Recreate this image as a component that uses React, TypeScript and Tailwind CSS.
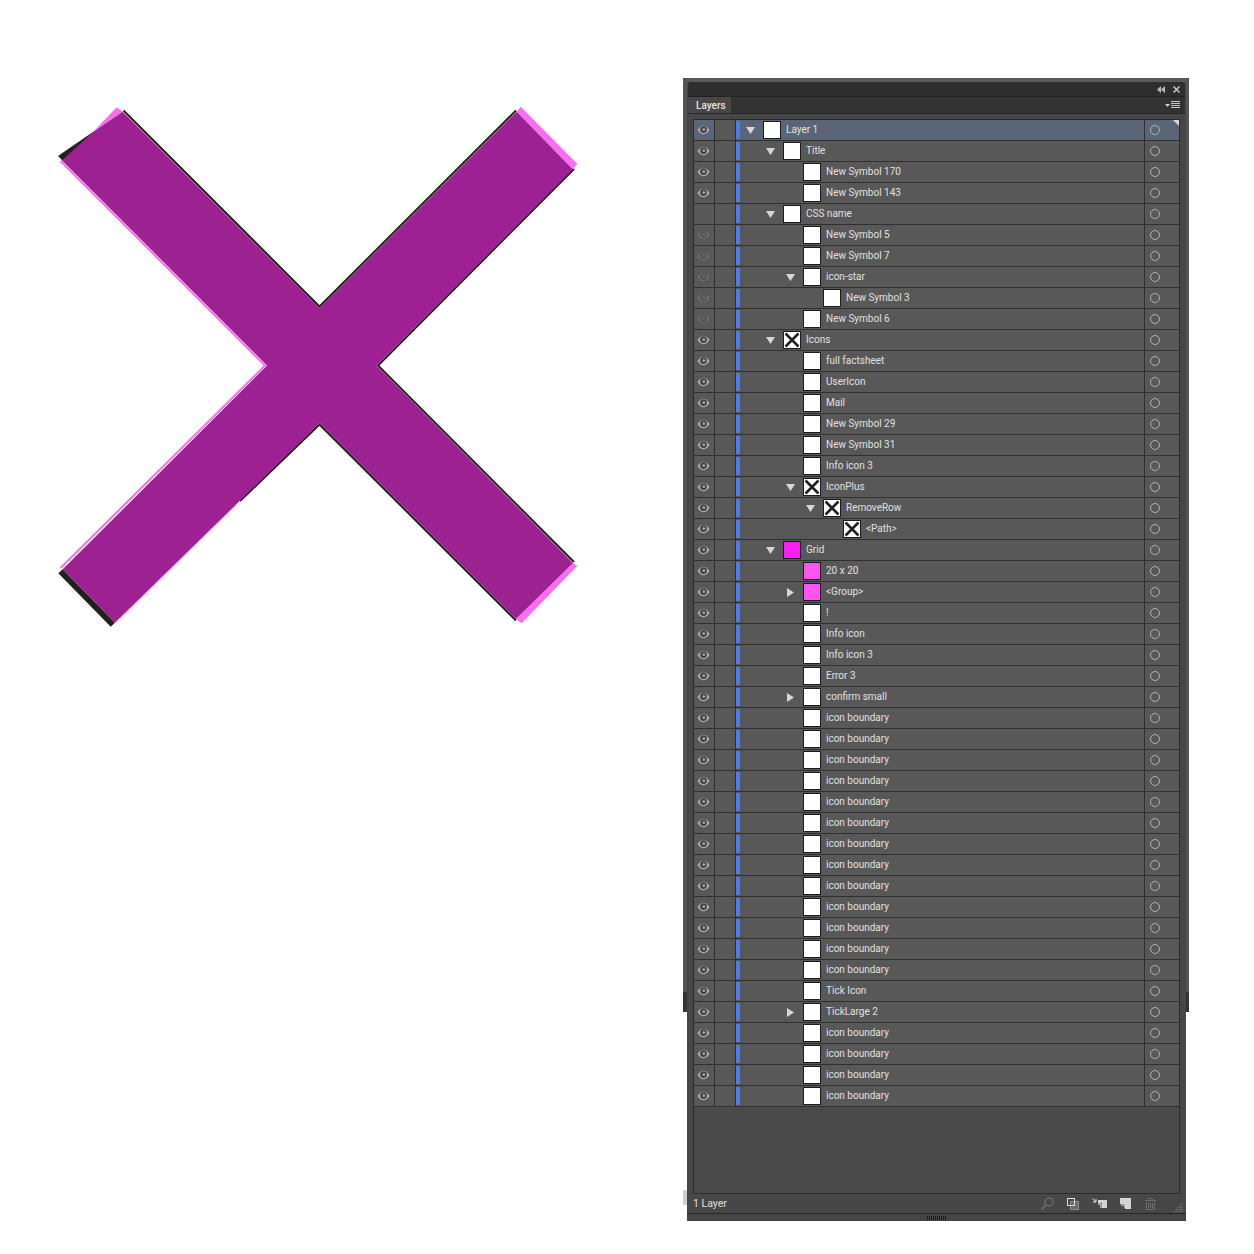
const rows = [
  { name: 'Layer 1', level: 0, arrow: 'down', eye: 'on', thumb: 'white', selected: true },
  { name: 'Title', level: 1, arrow: 'down', eye: 'on', thumb: 'white' },
  { name: 'New Symbol 170', level: 2, eye: 'on', thumb: 'white' },
  { name: 'New Symbol 143', level: 2, eye: 'on', thumb: 'white' },
  { name: 'CSS name', level: 1, arrow: 'down', eye: 'none', thumb: 'white' },
  { name: 'New Symbol 5', level: 2, eye: 'dim', thumb: 'white' },
  { name: 'New Symbol 7', level: 2, eye: 'dim', thumb: 'white' },
  { name: 'icon-star', level: 2, arrow: 'down', eye: 'dim', thumb: 'white' },
  { name: 'New Symbol 3', level: 3, eye: 'dim', thumb: 'white' },
  { name: 'New Symbol 6', level: 2, eye: 'dim', thumb: 'white' },
  { name: 'Icons', level: 1, arrow: 'down', eye: 'on', thumb: 'x' },
  { name: 'full factsheet', level: 2, eye: 'on', thumb: 'white' },
  { name: 'UserIcon', level: 2, eye: 'on', thumb: 'white' },
  { name: 'Mail', level: 2, eye: 'on', thumb: 'white' },
  { name: 'New Symbol 29', level: 2, eye: 'on', thumb: 'white' },
  { name: 'New Symbol 31', level: 2, eye: 'on', thumb: 'white' },
  { name: 'Info icon 3', level: 2, eye: 'on', thumb: 'white' },
  { name: 'IconPlus', level: 2, arrow: 'down', eye: 'on', thumb: 'x' },
  { name: 'RemoveRow', level: 3, arrow: 'down', eye: 'on', thumb: 'x' },
  { name: '<Path>', level: 4, eye: 'on', thumb: 'x' },
  { name: 'Grid', level: 1, arrow: 'down', eye: 'on', thumb: 'magenta' },
  { name: '20 x 20', level: 2, eye: 'on', thumb: 'pink' },
  { name: '<Group>', level: 2, arrow: 'right', eye: 'on', thumb: 'pink' },
  { name: '!', level: 2, eye: 'on', thumb: 'white' },
  { name: 'Info icon', level: 2, eye: 'on', thumb: 'white' },
  { name: 'Info icon 3', level: 2, eye: 'on', thumb: 'white' },
  { name: 'Error 3', level: 2, eye: 'on', thumb: 'white' },
  { name: 'confirm small', level: 2, arrow: 'right', eye: 'on', thumb: 'white' },
  ...Array.from({ length: 13 }, () => ({ name: 'icon boundary', level: 2, eye: 'on', thumb: 'white' })),
  { name: 'Tick Icon', level: 2, eye: 'on', thumb: 'white' },
  { name: 'TickLarge 2', level: 2, arrow: 'right', eye: 'on', thumb: 'white' },
  ...Array.from({ length: 4 }, () => ({ name: 'icon boundary', level: 2, eye: 'on', thumb: 'white' })),
];

const indent = ['pl-[5px]', 'pl-[25px]', 'pl-[45px]', 'pl-[65px]', 'pl-[85px]'];

function Eye({ dim }: { dim?: boolean }) {
  return (
    <svg width="13" height="10" viewBox="0 0 13 10" className={`mb-[1px] ${dim ? 'opacity-25' : ''}`}>
      <path d="M0.5 5C2.5 2 4.5 0.8 6.5 0.8S10.5 2 12.5 5C10.5 8 8.5 9.2 6.5 9.2S2.5 8 0.5 5Z" fill="#adadad" />
      <circle cx="6.5" cy="4.6" r="3.4" fill="#414141" />
      <circle cx="6.8" cy="4.4" r="1.5" fill="#9c9c9c" />
    </svg>
  );
}

function Thumb({ kind }: { kind: string }) {
  const bg = kind === 'magenta' ? 'bg-[#fb1ff3]' : kind === 'pink' ? 'bg-[#fa55f2]' : 'bg-white';
  return (
    <div className={`w-[18px] h-[18px] shrink-0 border border-[#1c1c1c] ${bg}`}>
      {kind === 'x' && (
        <svg width="16" height="16" viewBox="0 0 16 16" className="block">
          <path d="M1.5 1.5L14.5 14.5M14.5 1.5L1.5 14.5" stroke="#231f20" strokeWidth="2.6" />
        </svg>
      )}
    </div>
  );
}

function Arrow({ dir }: { dir?: string }) {
  return (
    <div className="w-[18px] shrink-0 pl-px flex items-center">
      {dir === 'down' && (
        <svg width="9" height="7" viewBox="0 0 9 7"><path d="M0 0H9L4.5 7Z" fill="#d6d6d6" /></svg>
      )}
      {dir === 'right' && (
        <svg width="7" height="9" viewBox="0 0 7 9" className="ml-[1px]"><path d="M0 0L7 4.5L0 9Z" fill="#d6d6d6" /></svg>
      )}
    </div>
  );
}

function LayerRow({ row }: { row: (typeof rows)[number] }) {
  const selected = 'selected' in row && row.selected;
  return (
    <div className={`relative flex h-[21px] border-b border-[#303030] ${selected ? 'bg-[#5a6577]' : 'bg-[#585858]'}`}>
      <div className="w-[21px] shrink-0 flex items-center justify-center border-r border-[#303030] pr-px">
        {row.eye !== 'none' && <Eye dim={row.eye === 'dim'} />}
      </div>
      <div className="w-[21px] shrink-0 border-r border-[#303030] bg-[#585858]" />
      <div className="w-[4px] shrink-0 bg-[#4b7bec] my-[1px]" />
      <div className={`flex-1 flex items-center ${indent[row.level]}`}>
        <Arrow dir={row.arrow} />
        <Thumb kind={row.thumb} />
        <span className="ml-[5px] mb-[2px] font-['Roboto',sans-serif] text-[10px] text-[#e0e0e0] whitespace-pre">{row.name}</span>
      </div>
      <div className="w-[35px] shrink-0 flex items-center pl-[5px] border-l border-[#303030]">
        <div className="w-[10px] h-[10px] rounded-full border border-[#b4b4b4]" />
      </div>
      {selected && (
        <svg width="6" height="6" viewBox="0 0 6 6" className="absolute top-0 right-0">
          <path d="M0 0H6V6Z" fill="#d8d8d8" />
        </svg>
      )}
    </div>
  );
}

function BigX() {
  return (
    <svg width="683" height="700" viewBox="0 0 683 700" className="block">
      <polygon points="58,156 93.3,131.7 70,160 62.7,160.7" fill="#231f20" />
      <polygon points="58.3,573.3 62.7,569.3 115,622.7 110.7,626.7" fill="#231f20" />
      <polygon points="116.7,107.3 122.7,111.7 93.3,131.7" fill="#f76ff0" />
      <polygon points="520.7,106.7 577.3,164 572.7,169.3 516.7,111.7" fill="#f76ff0" />
      <polygon points="577.3,566 521.5,623.3 516,619 573,563" fill="#f76ff0" />
      <polyline points="60.5,161 265,365.5 60.5,568" fill="none" stroke="#f76ff0" strokeWidth="2" />
      <polyline points="116,623.5 236,505" fill="none" stroke="#f76ff0" strokeWidth="1" opacity="0.6" />
      <polyline points="123.5,110.5 319.5,306.5 516,110.5" fill="none" stroke="#231f20" strokeWidth="2" />
      <polyline points="574,169 378,365.5 574,562" fill="none" stroke="#231f20" strokeWidth="2" />
      <polyline points="516,620.5 319.5,424.5 240,501" fill="none" stroke="#231f20" strokeWidth="2" />
      <polygon
        points="122.7,111.7 319.5,308 516.7,111.7 572.7,169.3 376.5,365.5 573,563 516,619 319.5,423 115,622.7 62.7,569.3 267,365.5 62,160.5 93.3,131.7"
        fill="#9e2192"
      />
    </svg>
  );
}

function ToolIcons() {
  return (
    <div className="flex items-center">
      <svg width="13" height="13" viewBox="0 0 13 13" className="mr-[13px]">
        <circle cx="8" cy="5" r="4" fill="none" stroke="#6a6a6a" strokeWidth="1.5" />
        <path d="M5 8L0.7 12.3" stroke="#6a6a6a" strokeWidth="2" />
      </svg>
      <svg width="12" height="12" viewBox="0 0 12 12" className="mr-[13px]">
        <rect x="3.5" y="3.5" width="8" height="8" fill="#6a6a6a" stroke="#8a8a8a" />
        <rect x="0.5" y="0.5" width="7" height="7" fill="none" stroke="#dcdcdc" />
      </svg>
      <svg width="15" height="11" viewBox="0 0 15 11" className="mr-[13px]">
        <rect x="6" y="2" width="9" height="8" fill="#d4d4d4" />
        <path d="M0.5 0.5L4 4M4 1V4H1" fill="none" stroke="#e8e8e8" strokeWidth="1" />
        <path d="M6 5H10V10H6Z" fill="#4a4a4a" />
        <path d="M6 6H9V10" fill="none" stroke="#f0f0f0" strokeWidth="1" />
      </svg>
      <svg width="11" height="11" viewBox="0 0 11 11" className="mr-[14px]">
        <rect width="11" height="11" fill="#d4d4d4" />
        <path d="M0 6H5V11H0Z" fill="#4a4a4a" />
        <path d="M1 7H5V10" fill="none" stroke="#eeeeee" />
      </svg>
      <svg width="11" height="12" viewBox="0 0 11 12">
        <path d="M0 2.5H11M3.5 2V0.5H7.5V2M1.5 3.5V11.5H9.5V3.5M3.5 5V10M5.5 5V10M7.5 5V10" fill="none" stroke="#6c6c6c" />
      </svg>
      <svg width="9" height="10" viewBox="0 0 9 10" className="ml-[18px] mr-[1px] mt-[6px]">
        <path d="M8 1V2M6 3V4M8 3V4M4 5V6M6 5V6M8 5V6M2 7V8M4 7V8M6 7V8M8 7V8M0 9V10M2 9V10M4 9V10M6 9V10M8 9V10" stroke="#858585" />
      </svg>
    </div>
  );
}

export default function App() {
  return (
    <div className="w-[1254px] h-[1254px] bg-white flex font-['Roboto',sans-serif]">
      <div className="w-[683px] shrink-0">
        <BigX />
      </div>
      <div className="mt-[78px] flex items-start">
        <div className="w-[4px] flex flex-col">
          <div className="h-[914px] bg-[#545454]" />
          <div className="h-[20px] bg-[#343434]" />
          <div className="h-[178px]" />
          <div className="h-[15px] bg-[#cfcfcf]" />
        </div>
        <div className="w-[499px] h-[1143px] bg-[#474747] flex flex-col">
          <div className="h-[4px] bg-[#5a5a5a]" />
          <div className="mx-px h-[15px] bg-[#2e2e2e] rounded-t-[3px] flex items-center justify-end gap-[8px] pr-[5px] border-b border-[#222]">
            <svg width="8" height="7" viewBox="0 0 8 7"><path d="M4 0V7L0 3.5ZM8 0V7L4 3.5Z" fill="#b8b8b8" /></svg>
            <svg width="7" height="7" viewBox="0 0 7 7"><path d="M0.5 0.5L6.5 6.5M6.5 0.5L0.5 6.5" stroke="#c6c6c6" strokeWidth="1.5" /></svg>
          </div>
          <div className="mx-px h-[17px] bg-[#333333] flex justify-between border-b border-[#262626]">
            <div className="w-[43px] bg-[#484848] flex items-center pl-[8px] text-[10px] font-medium text-[#e4e4e4]">Layers</div>
            <div className="flex items-center gap-px pr-[5px]">
              <svg width="5" height="3" viewBox="0 0 5 3"><path d="M0 0H5L2.5 3Z" fill="#d0d0d0" /></svg>
              <svg width="9" height="8" viewBox="0 0 9 8"><path d="M0 .5H9M0 2.5H9M0 4.5H9M0 6.5H9" stroke="#c8c8c8" /></svg>
            </div>
          </div>
          <div className="h-[5px]" />
          <div className="mx-[6px] h-[1075px] border border-[#2c2c2c] bg-[#4a4a4a] text-[0px]">
            {rows.map((row, i) => (
              <LayerRow key={i} row={row} />
            ))}
          </div>
          <div className="h-[20px] flex items-center justify-between pl-[6px] pr-[2px] border-b border-[#262626] text-[10.5px] text-[#e0e0e0]">
            <span>1 Layer</span>
            <ToolIcons />
          </div>
          <div className="flex-1 bg-[#454545] flex items-end justify-center pb-[1px]">
            <svg width="20" height="4" viewBox="0 0 20 4" className="block">
              <path d="M0.5 0V4M2.5 0V4M4.5 0V4M6.5 0V4M8.5 0V4M10.5 0V4M12.5 0V4M14.5 0V4M16.5 0V4M18.5 0V4" stroke="#1c1c1c" />
            </svg>
          </div>
        </div>
        <div className="w-[3px] flex flex-col">
          <div className="h-[914px] bg-[#545454]" />
          <div className="h-[20px] bg-[#343434]" />
        </div>
      </div>
    </div>
  );
}
